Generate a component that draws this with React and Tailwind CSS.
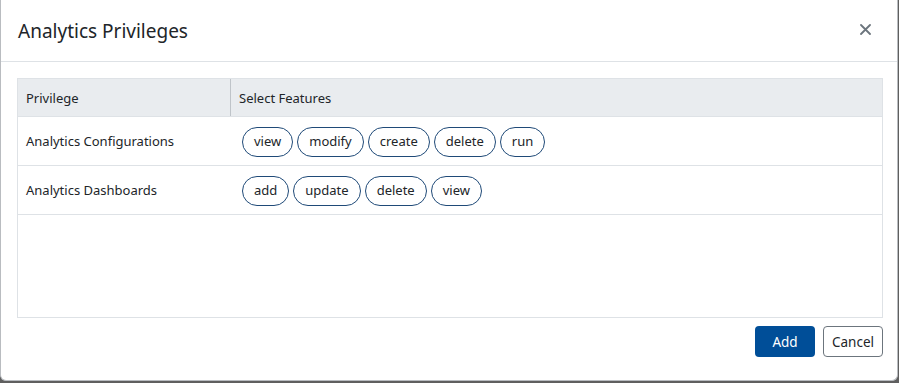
import React from "react";

const rows = [
  { name: "Analytics Configurations", features: ["view", "modify", "create", "delete", "run"] },
  { name: "Analytics Dashboards", features: ["add", "update", "delete", "view"] },
];

export default function App() {
  return (
    <div
      className="w-[899px] h-[383px] bg-[#5f5f5f] overflow-hidden"
      style={{ fontFamily: '"Segoe UI", "Noto Sans", "Open Sans", sans-serif' }}
    >
      <div className="w-[898px] h-[381px] bg-white border-l border-b border-r border-[#b9bcc0] rounded-b-[6px] flex flex-col text-[#212529]">
        <div className="h-[62px] flex items-center justify-between pl-[17px] pr-[26px] border-b border-[#dee2e6]">
          <div className="text-[19px] leading-none pt-[1px]">Analytics Privileges</div>
          <svg width="11" height="11" viewBox="0 0 11 11" className="mb-[2px]">
            <path d="M1 1L10 10M10 1L1 10" stroke="#6c757d" strokeWidth="1.8" strokeLinecap="round" />
          </svg>
        </div>
        <div className="pl-[16px] pr-[14px] pt-[16px]">
          <div className="border border-[#dee2e6] h-[240px] flex flex-col">
            <div className="flex h-[38px] bg-[#e9ecef] border-b border-[#dee2e6] text-[13px]">
              <div className="w-[213px] pl-[8px] pt-[2px] flex items-center border-r border-[#bfc4c9]">Privilege</div>
              <div className="pl-[8px] pt-[2px] flex items-center">Select Features</div>
            </div>
            {rows.map((r) => (
              <div key={r.name} className="flex h-[49px] border-b border-[#dee2e6] text-[13px]">
                <div className="w-[213px] pl-[8px] pt-[2px] flex items-center">{r.name}</div>
                <div className="pl-[11px] pt-[1px] flex items-center gap-[4px]">
                  {r.features.map((f, i) => (
                    <span
                      key={i}
                      className="h-[30px] px-[11px] pt-[1px] flex items-center rounded-full border border-[#1f4a78] text-[13px] text-[#212529]"
                    >
                      {f}
                    </span>
                  ))}
                </div>
              </div>
            ))}
          </div>
        </div>
        <div className="flex justify-end gap-[8px] pr-[14px] pt-[8px]">
          <button className="h-[31px] w-[60px] rounded-[4px] bg-[#004e98] text-white text-[13.5px] pt-[1px]">Add</button>
          <button className="h-[31px] w-[60px] rounded-[4px] bg-white border border-[#6c757d] text-[#212529] text-[13.5px] pt-[1px]">Cancel</button>
        </div>
      </div>
    </div>
  );
}
